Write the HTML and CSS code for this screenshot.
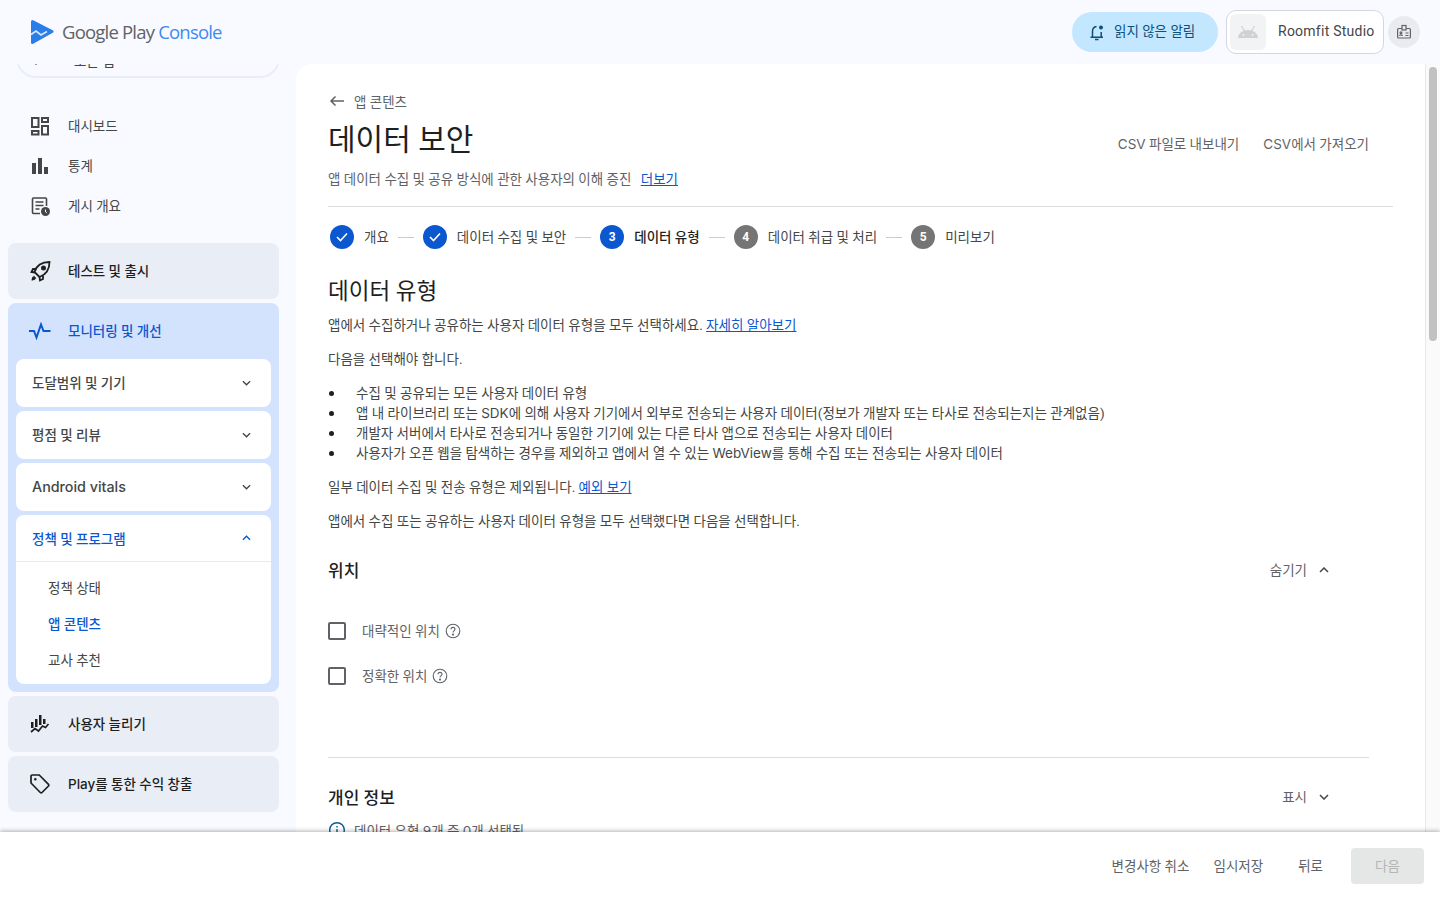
FILE: index.html
```html
<!DOCTYPE html>
<html lang="ko">
<head>
    <meta charset="UTF-8">
    <meta name="viewport" content="width=device-width, initial-scale=1.0">
    <title>데이터 보안 - Google Play Console</title>
    <link rel="stylesheet" href="styles.css">
</head>
<body>
    <header class="topbar">
        <div class="brand">
            <svg class="brand-logo" width="24" height="26" viewBox="0 0 24 26">
                <path d="M2.5 2.500L22 12.500 2.500 23.500z" fill="#2b7de9" stroke="#2b7de9" stroke-width="3" stroke-linejoin="round"/>
                <path d="M1 15.500l5-3.500 5 4 6-3.500" fill="none" stroke="#d6e9fd" stroke-width="1.700"/>
            </svg>
            <span class="brand-name">Google Play <span class="brand-accent">Console</span></span>
        </div>
        <div class="topbar-right">
            <button class="alert-pill">
                <svg width="18" height="18" viewBox="0 0 18 18" fill="none" stroke="#0b4f7a" stroke-width="1.5">
                    <path d="M2.500 14.200h12.500M4.500 14V8.500c0-2.800 1.800-4.600 4-4.900M13.200 9v5M7 16.500h3.500"/>
                    <circle cx="13" cy="4.500" r="2" fill="#0b4f7a" stroke="none"/>
                </svg>
                <span>읽지 않은 알림</span>
            </button>
            <div class="app-chip">
                <span class="app-icon">
                    <svg width="22" height="14" viewBox="0 0 22 14" fill="#cfd1d3">
                        <path d="M1 13c.3-4.500 4.500-8 10-8s9.700 3.500 10 8z"/>
                        <path d="M4.500 1l3 5M17.500 1l-3 5" stroke="#cfd1d3" stroke-width="1.2"/>
                        <circle cx="6.500" cy="10" r="1" fill="#f1f3f4"/>
                        <circle cx="15.500" cy="10" r="1" fill="#f1f3f4"/>
                    </svg>
                </span>
                <span class="app-name">Roomfit Studio</span>
            </div>
            <span class="id-btn">
                <svg width="16" height="16" viewBox="0 0 16 16" fill="none" stroke="#5f6368" stroke-width="1.2">
                    <rect x="1.600" y="4.500" width="12.800" height="9.500" rx="1"/>
                    <rect x="6" y="1.500" width="4" height="4.500" fill="#e9ebef"/>
                    <path d="M9.500 9h3M9.500 11.500h3M3.500 12c.2-1.600 2.800-1.600 3 0"/>
                    <circle cx="5" cy="8.700" r=".9"/>
                </svg>
            </span>
        </div>
    </header>

    <div class="shell">
        <nav class="sidebar">
            <div class="app-search">
                <svg class="search-chev" width="14" height="14" viewBox="0 0 14 14" fill="none" stroke="#444" stroke-width="1.5">
                    <path d="M4 5l3 3 3-3"/>
                </svg>
                모든 앱
            </div>

            <ul class="nav-plain">
                <li class="nav-item">
                    <svg class="nav-icon" width="20" height="20" viewBox="0 0 20 20" fill="none" stroke="#444746" stroke-width="2">
                        <rect x="2" y="2" width="6.500" height="9"/>
                        <rect x="12" y="2" width="6" height="4"/>
                        <rect x="2" y="15" width="6.500" height="3.500"/>
                        <rect x="12" y="10" width="6" height="8.500"/>
                    </svg>
                    대시보드
                </li>
                <li class="nav-item">
                    <svg class="nav-icon" width="20" height="20" viewBox="0 0 20 20" fill="#444746">
                        <rect x="2" y="7" width="4" height="11"/>
                        <rect x="8" y="2" width="4" height="16"/>
                        <rect x="14" y="11" width="4" height="7"/>
                    </svg>
                    통계
                </li>
                <li class="nav-item">
                    <svg class="nav-icon" width="20" height="20" viewBox="0 0 20 20" fill="none" stroke="#444746" stroke-width="1.6">
                        <path d="M10 17.500H3.500a1 1 0 0 1-1-1V3a1 1 0 0 1 1-1h12a1 1 0 0 1 1 1v7"/>
                        <path d="M5.500 6h8M5.500 9.500h8M5.500 13h4"/>
                        <circle cx="15.500" cy="15.500" r="4.500" fill="#444746" stroke="none"/>
                        <path d="M15.500 13.500v2.300l1.300 1" stroke="#fff" stroke-width="1"/>
                    </svg>
                    게시 개요
                </li>
            </ul>

            <div class="nav-group">
                <svg class="nav-icon" width="22" height="22" viewBox="0 0 22 22" fill="none" stroke="#1f1f1f" stroke-width="1.8">
                    <path d="M7 14.500l-2.500-2.500c1.500-5 6-10 15-10 0 8-4.500 13-10 15z"/>
                    <path d="M6 9H3L1.500 12 5 12.500M13 15.500V19l-3 1.500-.5-3.500"/>
                    <path d="M4.500 16.500c-1 .5-2 2-2 3 1.500 0 2.500-1 3-2" fill="#1f1f1f"/>
                    <circle cx="13.500" cy="8" r="1.600" fill="#1f1f1f"/>
                </svg>
                테스트 및 출시
            </div>

            <div class="nav-group-open">
                <div class="nav-group-head">
                    <svg class="nav-icon" width="24" height="18" viewBox="0 0 24 18" fill="none" stroke="#0b57d0" stroke-width="2">
                        <path d="M1 9h5l2.500 6.500L13 2.500 15.500 9h7"/>
                    </svg>
                    모니터링 및 개선
                </div>
                <div class="sub-card">
                    <div class="sub-head"><span class="sub-label">도달범위 및 기기</span><svg class="chev" width="9" height="6" viewBox="0 0 10 6"><path d="M1 1l4 4 4-4"/></svg></div>
                </div>
                <div class="sub-card">
                    <div class="sub-head"><span class="sub-label">평점 및 리뷰</span><svg class="chev" width="9" height="6" viewBox="0 0 10 6"><path d="M1 1l4 4 4-4"/></svg></div>
                </div>
                <div class="sub-card">
                    <div class="sub-head"><span class="sub-latin">Android vitals</span><svg class="chev" width="9" height="6" viewBox="0 0 10 6"><path d="M1 1l4 4 4-4"/></svg></div>
                </div>
                <div class="sub-card sub-card-open">
                    <div class="sub-head sub-head-open"><span>정책 및 프로그램</span><svg class="chev" width="9" height="6" viewBox="0 0 10 6"><path d="M1 5l4-4 4 4"/></svg></div>
                    <ul class="sub-list">
                        <li>정책 상태</li>
                        <li class="current">앱 콘텐츠</li>
                        <li>교사 추천</li>
                    </ul>
                </div>
            </div>

            <div class="nav-group">
                <svg class="nav-icon" width="20" height="20" viewBox="0 0 20 20" fill="#1f1f1f">
                    <rect x="1" y="8" width="2.500" height="6"/>
                    <rect x="5" y="5" width="2.500" height="8"/>
                    <rect x="9" y="1" width="2.500" height="10"/>
                    <rect x="13" y="5" width="2.500" height="5"/>
                    <path d="M1 18l4-3.500 3.500 2.500 4-5 3 1.500 3-3.500" fill="none" stroke="#1f1f1f" stroke-width="1.7"/>
                </svg>
                사용자 늘리기
            </div>
            <div class="nav-group">
                <svg class="nav-icon" width="22" height="22" viewBox="1 0 22 22" fill="none" stroke="#1f1f1f" stroke-width="1.7">
                    <path d="M2 3.200c0-.7.500-1.200 1.200-1.200h7l9.300 9.300c.5.500.5 1.200 0 1.700l-6.500 6.500c-.5.500-1.200.5-1.700 0L2 10z"/>
                    <circle cx="6.300" cy="6.300" r="1.200" fill="#1f1f1f" stroke="none"/>
                </svg>
                <span><span class="latin">Play</span>를 통한 수익 창출</span>
            </div>
        </nav>

        <main class="content">
            <a class="crumb">
                <svg width="18" height="12" viewBox="0 0 18 12" fill="none" stroke="#5f6368" stroke-width="1.5">
                    <path d="M16 6H3M7.500 1.500L3 6l4.500 4.500"/>
                </svg>
                앱 콘텐츠
            </a>
            <div class="title-row">
                <h1>데이터 보안</h1>
                <div class="title-actions">
                    <span><span class="latin">CSV</span> 파일로 내보내기</span>
                    <span><span class="latin">CSV</span>에서 가져오기</span>
                </div>
            </div>
            <p class="subtitle">앱 데이터 수집 및 공유 방식에 관한 사용자의 이해 증진 <a href="#" class="link more">더보기</a></p>

            <ol class="stepper">
                <li class="step done">
                    <span class="step-dot"><svg width="14" height="12" viewBox="0 0 14 12" fill="none" stroke="#fff" stroke-width="1.6"><path d="M2 6l3.500 3.500L12 2.500"/></svg></span>
                    개요
                </li>
                <li class="step-line"></li>
                <li class="step done">
                    <span class="step-dot"><svg width="14" height="12" viewBox="0 0 14 12" fill="none" stroke="#fff" stroke-width="1.6"><path d="M2 6l3.500 3.500L12 2.500"/></svg></span>
                    데이터 수집 및 보안
                </li>
                <li class="step-line"></li>
                <li class="step active"><span class="step-dot">3</span>데이터 유형</li>
                <li class="step-line"></li>
                <li class="step"><span class="step-dot">4</span>데이터 취급 및 처리</li>
                <li class="step-line"></li>
                <li class="step"><span class="step-dot">5</span>미리보기</li>
            </ol>

            <h2>데이터 유형</h2>
            <p class="para">앱에서 수집하거나 공유하는 사용자 데이터 유형을 모두 선택하세요. <a href="#" class="link">자세히 알아보기</a></p>
            <p class="para">다음을 선택해야 합니다.</p>
            <ul class="bullets">
                <li>수집 및 공유되는 모든 사용자 데이터 유형</li>
                <li>앱 내 라이브러리 또는 <span class="latin">SDK</span>에 의해 사용자 기기에서 외부로 전송되는 사용자 데이터(정보가 개발자 또는 타사로 전송되는지는 관계없음)</li>
                <li>개발자 서버에서 타사로 전송되거나 동일한 기기에 있는 다른 타사 앱으로 전송되는 사용자 데이터</li>
                <li>사용자가 오픈 웹을 탐색하는 경우를 제외하고 앱에서 열 수 있는 <span class="latin">WebView</span>를 통해 수집 또는 전송되는 사용자 데이터</li>
            </ul>
            <p class="para">일부 데이터 수집 및 전송 유형은 제외됩니다. <a href="#" class="link">예외 보기</a></p>
            <p class="para">앱에서 수집 또는 공유하는 사용자 데이터 유형을 모두 선택했다면 다음을 선택합니다.</p>

            <section class="section-location">
                <div class="section-head">
                    <h3>위치</h3>
                    <span class="toggle">숨기기<svg class="chev" width="10" height="6" viewBox="0 0 10 6"><path d="M1 5l4-4 4 4"/></svg></span>
                </div>
                <label class="check-row">
                    <span class="check-box"></span>
                    대략적인 위치
                    <svg class="help" width="16" height="16" viewBox="0 0 16 16" fill="none" stroke="#5f6368" stroke-width="1.1">
                        <circle cx="8" cy="8" r="6.800"/>
                        <path d="M6 6.300c0-2.600 4-2.600 4 0 0 1.600-2 1.600-2 3.200"/>
                        <circle cx="8" cy="11.600" r=".5"/>
                    </svg>
                </label>
                <label class="check-row">
                    <span class="check-box"></span>
                    정확한 위치
                    <svg class="help" width="16" height="16" viewBox="0 0 16 16" fill="none" stroke="#5f6368" stroke-width="1.1">
                        <circle cx="8" cy="8" r="6.800"/>
                        <path d="M6 6.300c0-2.600 4-2.600 4 0 0 1.600-2 1.600-2 3.200"/>
                        <circle cx="8" cy="11.600" r=".5"/>
                    </svg>
                </label>
            </section>

            <section class="section-personal">
                <div class="section-head">
                    <h3>개인 정보</h3>
                    <span class="toggle">표시<svg class="chev" width="10" height="6" viewBox="0 0 10 6"><path d="M1 1l4 4 4-4"/></svg></span>
                </div>
                <div class="info-row">
                    <svg width="18" height="18" viewBox="0 0 18 18" fill="none" stroke="#0b5c8c" stroke-width="1.4">
                        <circle cx="9" cy="9" r="7.300"/>
                        <path d="M9 8v5M9 5v1.500"/>
                    </svg>
                    <span>데이터 유형 <span class="latin">9</span>개 중 <span class="latin">0</span>개 선택됨</span>
                </div>
            </section>
        </main>

        <div class="scroll-track"><div class="scroll-thumb"></div></div>
    </div>

    <footer class="actions">
        <button class="text-btn">변경사항 취소</button>
        <button class="text-btn">임시저장</button>
        <button class="text-btn back-btn">뒤로</button>
        <button class="next-btn" disabled>다음</button>
    </footer>
</body>
</html>
```

FILE: styles.css
```css
* {
    box-sizing: border-box;
}

html, body {
    height: 100%;
}

body {
    margin: 0;
    background: #f8faff;
    color: #1f1f1f;
    font-family: Roboto, "Noto Sans CJK KR", sans-serif;
    font-size: 13.5px;
    overflow: hidden;
    display: grid;
    grid-template-rows: 64px 1fr 68px;
}

ul, ol {
    margin: 0;
    padding: 0;
    list-style: none;
}

button {
    font: inherit;
    border: none;
    background: none;
}

/* Latin words inside Korean text run a bit wider */
.latin {
    font-family: Inter, sans-serif;
}

/* Top bar */
.topbar {
    display: flex;
    justify-content: space-between;
    align-items: center;
    padding: 0 20px 0 30px;
}

.brand {
    display: flex;
    align-items: center;
    gap: 8px;
}

.brand-name {
    font-family: "Open Sans", sans-serif;
    font-size: 18.5px;
    letter-spacing: -0.8px;
    color: #5f6368;
    margin-bottom: 2px;
}

.brand-accent {
    color: #3d8bf0;
}

.topbar-right {
    display: flex;
    align-items: center;
}

.alert-pill {
    width: 146px;
    height: 40px;
    padding: 0 0 0 16px;
    border-radius: 20px;
    background: #c2e7ff;
    color: #0b4f7a;
    display: flex;
    align-items: center;
    gap: 8px;
    margin-right: 8px;
}

.alert-pill span {
    padding-bottom: 4px;
}

.app-chip {
    width: 158px;
    height: 44px;
    padding: 3px;
    background: #fff;
    border: 1px solid #d5d7de;
    border-radius: 10px;
    display: flex;
    align-items: center;
    gap: 12px;
    margin-right: 4px;
}

.app-icon {
    width: 36px;
    height: 36px;
    background: #f1f3f4;
    border-radius: 6px;
    display: flex;
    align-items: center;
    justify-content: center;
}

.app-name {
    font-size: 14px;
    letter-spacing: 0.25px;
    color: #444746;
    padding-bottom: 2px;
}

.id-btn {
    width: 32px;
    height: 32px;
    border-radius: 50%;
    background: #e9ebef;
    display: flex;
    align-items: center;
    justify-content: center;
}

/* Page body */
.shell {
    display: grid;
    grid-template-columns: 296px 1fr 15px;
    min-height: 0;
}

.sidebar {
    padding: 0 17px 0 8px;
    overflow: hidden;
}

.app-search {
    height: 40px;
    margin: -26px -1px 0 8px;
    padding: 6px 0 0 11px;
    border: 2px solid #e9eef6;
    border-top: none;
    border-radius: 0 0 20px 20px;
    display: flex;
    align-items: center;
    gap: 31px;
    color: #444746;
}

.search-chev {
    margin-top: 6px;
}

.nav-plain {
    margin-top: 28px;
    margin-bottom: 17px;
}

.nav-item {
    height: 40px;
    display: flex;
    align-items: center;
    padding: 0 0 2px 60px;
    position: relative;
    color: #444746;
}

.nav-icon {
    position: absolute;
    left: 22px;
    top: 50%;
    transform: translateY(-50%);
}

.nav-group {
    height: 56px;
    margin-bottom: 4px;
    background: #e9eef6;
    border-radius: 8px;
    display: flex;
    align-items: center;
    padding: 0 0 3px 60px;
    position: relative;
    font-weight: 500;
}

.nav-group-open {
    margin-bottom: 4px;
    padding: 0 8px 8px;
    background: #d3e3fd;
    border-radius: 8px;
}

.nav-group-head {
    height: 56px;
    margin: 0 -8px;
    padding: 0 0 2px 60px;
    display: flex;
    align-items: center;
    position: relative;
    color: #0b57d0;
    font-weight: 500;
}

.nav-group-head .nav-icon {
    left: 20px;
}

.sub-card {
    margin-bottom: 4px;
    background: #fff;
    border-radius: 8px;
}

.sub-card-open {
    margin-bottom: 0;
}

.sub-head {
    height: 48px;
    padding: 0 20px 0 16px;
    display: flex;
    align-items: center;
    justify-content: space-between;
    color: #444746;
    font-weight: 500;
}

.sub-label {
    padding-bottom: 2px;
}

.sub-latin {
    font-family: Inter, sans-serif;
    font-size: 14.3px;
    padding-bottom: 2px;
}

.sub-head-open {
    height: 47px;
    border-bottom: 1px solid #e9eaec;
    color: #0b57d0;
}

.sub-head-open .chev {
    stroke: #0b57d0;
}

.chev {
    fill: none;
    stroke: #444746;
    stroke-width: 1.5;
}

.sub-list {
    padding: 8px 0 6px;
}

.sub-list li {
    height: 36px;
    display: flex;
    align-items: center;
    padding: 0 0 3px 32px;
    color: #444746;
}

.sub-list .current {
    color: #0b57d0;
    font-weight: 500;
}

/* Main content */
.content {
    background: #fff;
    border-radius: 16px 0 0 0;
    padding: 26px 32px 0;
    overflow: hidden;
    color: #444746;
}

.crumb {
    display: flex;
    align-items: center;
    gap: 8px;
    height: 22px;
    color: #5f6368;
}

.title-row {
    display: flex;
    justify-content: space-between;
    align-items: center;
    height: 49px;
    padding-right: 24px;
}

h1 {
    margin: 0;
    font-size: 30px;
    font-weight: 400;
    color: #1f1f1f;
}

.title-actions {
    display: flex;
    gap: 24px;
    margin-top: 12px;
    color: #5f6368;
}

.subtitle {
    margin: 0;
    padding: 8px 0 17px;
    line-height: 20px;
    border-bottom: 1px solid #dadce0;
    color: #5f6368;
}

.link {
    color: #0b57d0;
}

.more {
    margin-left: 6px;
}

.stepper {
    display: flex;
    align-items: center;
    height: 60px;
    padding-left: 2px;
    margin-bottom: 6px;
}

.step {
    display: flex;
    align-items: center;
    gap: 10px;
    padding-bottom: 2px;
    color: #444746;
}

.step-dot {
    width: 24px;
    height: 24px;
    margin-top: 2px;
    border-radius: 50%;
    background: #757575;
    color: #fff;
    font-size: 12px;
    font-weight: 700;
    display: flex;
    align-items: center;
    justify-content: center;
}

.done .step-dot,
.active .step-dot {
    background: #0b57d0;
}

.active {
    color: #1f1f1f;
    font-weight: 500;
}

.step-line {
    width: 16px;
    height: 1px;
    margin: 0 9px;
    background: #c9cbce;
}

h2 {
    margin: 0;
    font-size: 22.5px;
    font-weight: 400;
    line-height: 36px;
    color: #1f1f1f;
}

.para {
    margin: 0;
    padding-top: 7px;
    padding-bottom: 7px;
    line-height: 20px;
}

h2 + .para {
    padding-top: 6px;
}

.bullets {
    padding: 7px 0 7px 28px;
}

.bullets li {
    line-height: 20px;
    position: relative;
}

.bullets li::before {
    content: "";
    position: absolute;
    left: -27px;
    top: 8px;
    width: 5px;
    height: 5px;
    border-radius: 50%;
    background: #1f1f1f;
}

.section-location {
    height: 220px;
    padding: 15px 40px 0 0;
    margin-right: 24px;
    border-bottom: 1px solid #dadce0;
}

.section-personal {
    padding: 22px 64px 0 0;
}

.section-head {
    display: flex;
    justify-content: space-between;
    align-items: center;
    height: 32px;
}

h3 {
    margin: 0;
    font-size: 17px;
    font-weight: 500;
    color: #1f1f1f;
}

.toggle {
    display: flex;
    align-items: center;
    gap: 12px;
    color: #5f6368;
}

.toggle .chev {
    margin-top: 2px;
}

.check-row {
    display: flex;
    align-items: center;
    height: 45px;
    padding-bottom: 2px;
    color: #5f6368;
}

.section-head + .check-row {
    margin-top: 23px;
}

.check-box {
    width: 18px;
    height: 18px;
    margin: 2px 16px 0 0;
    border: 2px solid #5f6368;
    border-radius: 2px;
}

.help {
    margin: 2px 0 0 5px;
}

.info-row {
    display: flex;
    align-items: center;
    gap: 8px;
    margin-top: 8px;
    height: 20px;
    color: #5f6368;
}

.scroll-track {
    background: #fafafa;
    border-left: 1px solid #e8e8e8;
    padding: 3px 3px 0 3px;
}

.scroll-thumb {
    height: 274px;
    background: #c1c1c1;
    border-radius: 4px;
}

/* Bottom action bar */
.actions {
    position: relative;
    background: #fff;
    box-shadow: 0 -1px 4px rgba(0, 0, 0, 0.3);
    display: flex;
    align-items: center;
    justify-content: flex-end;
    gap: 24px;
    padding-right: 16px;
}

.text-btn {
    padding: 0 0 3px;
    color: #5f6368;
}

.back-btn {
    margin-left: 11px;
    margin-right: 4px;
}

.next-btn {
    width: 73px;
    height: 36px;
    padding: 0 0 3px;
    background: #e5e7e7;
    border-radius: 4px;
    color: #b4b6b7;
}
```
